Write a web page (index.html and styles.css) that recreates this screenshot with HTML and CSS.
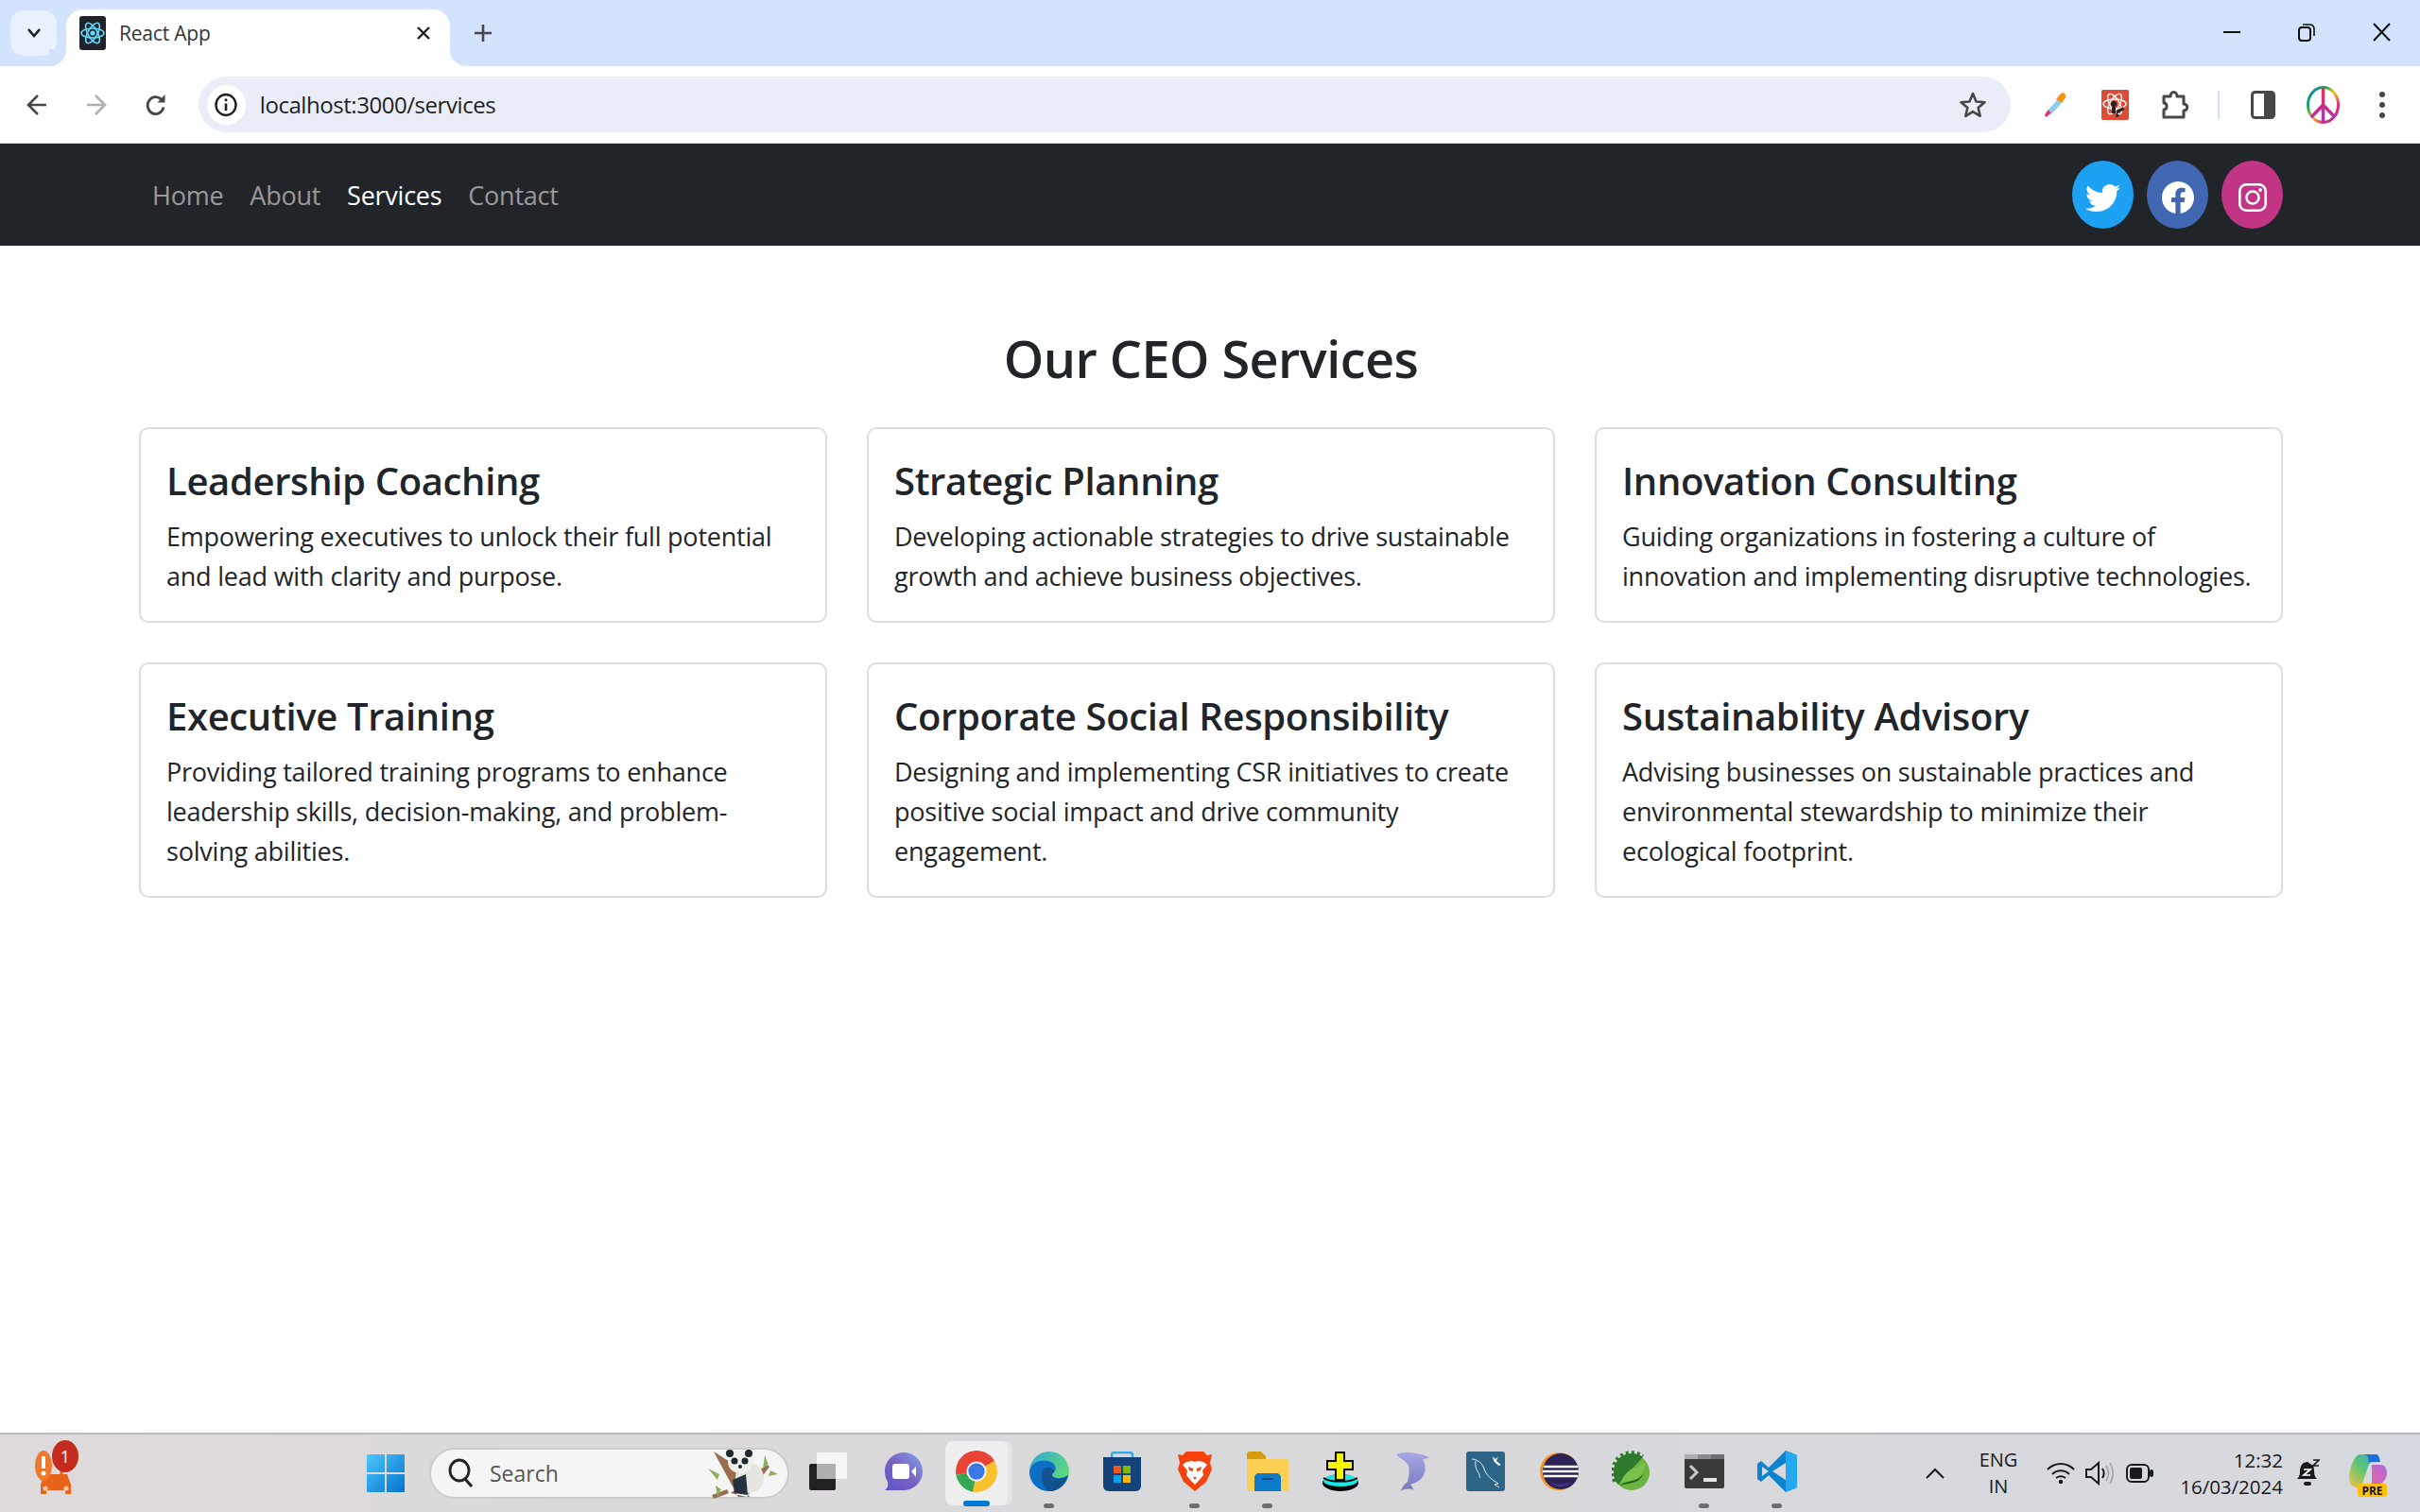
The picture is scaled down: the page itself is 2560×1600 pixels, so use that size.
FILE: index.html
```html
<!DOCTYPE html>
<html lang="en">
<head>
    <meta charset="UTF-8">
    <meta name="viewport" content="width=device-width, initial-scale=1.0">
    <title>React App</title>
    <link rel="stylesheet" href="styles.css">
</head>
<body>
    <div class="tabstrip">
        <div class="tab-list">
            <svg width="16" height="12" viewBox="0 0 16 12"><path d="M2 2l6 7 6-7" fill="none" stroke="#1f1f1f" stroke-width="2.6"/></svg>
        </div>
        <div class="tab">
            <svg class="favicon" width="28" height="36" viewBox="0 0 28 36">
                <rect width="28" height="36" rx="3" fill="#20232a"/>
                <g fill="none" stroke="#61dafb" stroke-width="1.6">
                    <ellipse cx="14" cy="18" rx="12" ry="5"/>
                    <ellipse cx="14" cy="18" rx="12" ry="5" transform="rotate(60 14 18)"/>
                    <ellipse cx="14" cy="18" rx="12" ry="5" transform="rotate(120 14 18)"/>
                </g>
                <circle cx="14" cy="18" r="2.6" fill="#61dafb"/>
            </svg>
            <span class="tab-title">React App</span>
            <svg class="tab-close" width="16" height="16" viewBox="0 0 16 16"><path d="M2 2l12 12M14 2L2 14" stroke="#1f1f1f" stroke-width="2.4"/></svg>
        </div>
        <svg class="new-tab" width="18" height="18" viewBox="0 0 18 18"><path d="M9 0v18M0 9h18" stroke="#474747" stroke-width="2.6"/></svg>
        <div class="window-btns">
            <svg width="18" height="18" viewBox="0 0 18 18"><path d="M0 9h18" stroke="#111" stroke-width="2"/></svg>
            <svg width="18" height="20" viewBox="0 0 18 20"><rect x="1" y="5" width="12" height="14" rx="3" fill="none" stroke="#111" stroke-width="2"/><path d="M5 2h7c3 0 5 2 5 5v7" fill="none" stroke="#111" stroke-width="1.6"/></svg>
            <svg width="19" height="20" viewBox="0 0 19 20"><path d="M1 1l17 18M18 1L1 19" stroke="#111" stroke-width="2"/></svg>
        </div>
    </div>

    <div class="toolbar">
        <div class="nav-btns">
            <svg width="22" height="24" viewBox="0 0 22 24"><path d="M21 12H3M12 2L2 12l10 10" fill="none" stroke="#474747" stroke-width="2.6"/></svg>
            <svg width="22" height="24" viewBox="0 0 22 24"><path d="M1 12h18M10 2l10 10-10 10" fill="none" stroke="#b0b0b0" stroke-width="2.6"/></svg>
            <svg width="22" height="24" viewBox="0 0 22 24"><path d="M19 14.500A8.500 9 0 1 1 16.500 6" fill="none" stroke="#474747" stroke-width="2.8"/><path d="M20.500 1v8.500h-8z" fill="#474747"/></svg>
        </div>
        <div class="omnibox">
            <div class="site-info">
                <svg width="24" height="26" viewBox="0 0 24 26"><ellipse cx="12" cy="13" rx="10.500" ry="11" fill="none" stroke="#1f1f1f" stroke-width="2.4"/><path d="M12 11.500V19" stroke="#1f1f1f" stroke-width="2.6"/><circle cx="12" cy="7.800" r="1.500" fill="#1f1f1f"/></svg>
            </div>
            <span class="url">localhost:3000/services</span>
            <svg class="star" width="30" height="30" viewBox="0 0 30 30"><path d="M15 3l3.500 8.500 9 .7-6.900 5.800 2.100 8.800-7.700-4.700-7.700 4.700 2.100-8.800-6.900-5.800 9-.7z" fill="none" stroke="#474747" stroke-width="2.600" stroke-linejoin="round"/></svg>
        </div>
        <div class="extensions">
            <svg class="ext-dropper" width="24" height="28" viewBox="0 0 24 28">
                <path d="M4 20L15 8l4 4L7 25z" fill="#8fcdf0"/>
                <path d="M1 25l3.500-6 3 3.500-5 4.500z" fill="#f0246e"/>
                <path d="M13 8l5-6c2-2 6 0 5 4l-2 3-2 3z" fill="#f79009"/>
            </svg>
            <svg class="ext-react" width="29" height="32" viewBox="0 0 29 32">
                <rect width="29" height="32" rx="2" fill="#de4b37"/>
                <g fill="none" stroke="#fff" stroke-width="1.300">
                    <ellipse cx="14" cy="15" rx="12" ry="5"/>
                    <ellipse cx="14" cy="15" rx="12" ry="5" transform="rotate(60 14 15)"/>
                    <ellipse cx="14" cy="15" rx="12" ry="5" transform="rotate(120 14 15)"/>
                </g>
                <circle cx="13" cy="15" r="3" fill="#222"/>
                <path d="M11 18h4v7h-4zM16 22l7-4 1 3-7 4 2 3-4 1z" fill="#222"/>
            </svg>
            <svg class="ext-puzzle" width="30" height="32" viewBox="0 0 30 32"><path d="M3 7h7c0-6 7-6 7 0h7v8c5 0 5 7 0 7v7H3v-8c4 0 4-7 0-7z" fill="none" stroke="#474747" stroke-width="3" stroke-linejoin="round"/></svg>
            <span class="ext-divider"></span>
            <svg class="ext-panel" width="26" height="30" viewBox="0 0 26 30"><rect x="1.500" y="1.500" width="23" height="27" rx="3" fill="none" stroke="#474747" stroke-width="3"/><rect x="14" y="2" width="10" height="26" fill="#474747"/></svg>
            <svg class="ext-peace" width="35" height="40" viewBox="0 0 35 40">
                <defs>
                    <linearGradient id="peaceGrad" x1="0" y1="0" x2="1" y2="1">
                        <stop offset="0" stop-color="#0a7bc4"/>
                        <stop offset=".3" stop-color="#21a95b"/>
                        <stop offset=".5" stop-color="#f5c518"/>
                        <stop offset=".75" stop-color="#ec2a6d"/>
                        <stop offset="1" stop-color="#8a2fc0"/>
                    </linearGradient>
                    <linearGradient id="peaceStem" x1="0" y1="0" x2="0" y2="1">
                        <stop offset="0" stop-color="#f0304f"/>
                        <stop offset="1" stop-color="#a632b8"/>
                    </linearGradient>
                </defs>
                <ellipse cx="17.500" cy="20" rx="16" ry="18.500" fill="#fff" stroke="url(#peaceGrad)" stroke-width="3"/>
                <path d="M17.500 2v36M17.500 20L5 33M17.500 20L30 33" fill="none" stroke="url(#peaceStem)" stroke-width="3.400"/>
            </svg>
            <svg class="ext-menu" width="8" height="30" viewBox="0 0 8 30"><circle cx="4" cy="4" r="3" fill="#474747"/><circle cx="4" cy="15" r="3" fill="#474747"/><circle cx="4" cy="26" r="3" fill="#474747"/></svg>
        </div>
    </div>

    <nav class="navbar">
        <div class="nav-links">
            <a class="nav-link" href="#">Home</a>
            <a class="nav-link" href="#">About</a>
            <a class="nav-link active" href="#">Services</a>
            <a class="nav-link" href="#">Contact</a>
        </div>
        <div class="socials">
            <a class="social twitter" href="#">
                <svg width="37" height="30" viewBox="0 1.500 16 13.500" preserveAspectRatio="none"><path fill="#fff" d="M5.026 15c6.038 0 9.341-5.003 9.341-9.334 0-.14 0-.282-.006-.422A6.685 6.685 0 0 0 16 3.542a6.658 6.658 0 0 1-1.889.518 3.301 3.301 0 0 0 1.447-1.817 6.533 6.533 0 0 1-2.087.793A3.286 3.286 0 0 0 7.875 6.03a9.325 9.325 0 0 1-6.767-3.429 3.289 3.289 0 0 0 1.018 4.382A3.323 3.323 0 0 1 .64 6.575v.045a3.288 3.288 0 0 0 2.632 3.218 3.203 3.203 0 0 1-.865.115 3.23 3.23 0 0 1-.614-.057 3.283 3.283 0 0 0 3.067 2.277A6.588 6.588 0 0 1 .78 13.58a6.32 6.32 0 0 1-.78-.045A9.344 9.344 0 0 0 5.026 15z"/></svg>
            </a>
            <a class="social facebook" href="#">
                <svg width="34" height="34" viewBox="0 0 16 16"><path fill="#fff" d="M16 8.049c0-4.446-3.582-8.05-8-8.05C3.580 0-.002 3.603-.002 8.050c0 4.017 2.926 7.347 6.750 7.951v-5.625h-2.030V8.050H6.750V6.275c0-2.017 1.195-3.131 3.022-3.131.876 0 1.791.157 1.791.157v1.980h-1.009c-.993 0-1.303.621-1.303 1.258v1.510h2.218l-.354 2.326H9.250V16c3.824-.604 6.750-3.934 6.750-7.951z"/></svg>
            </a>
            <a class="social instagram" href="#">
                <svg width="30" height="30" viewBox="0 0 30 30"><rect x="1.300" y="1.300" width="27.400" height="27.400" rx="7" fill="none" stroke="#fff" stroke-width="2.600"/><circle cx="15" cy="15" r="6.500" fill="none" stroke="#fff" stroke-width="2.600"/><circle cx="23" cy="7" r="1.900" fill="#fff"/></svg>
            </a>
        </div>
    </nav>

    <main class="services">
        <h2 class="services-title">Our CEO Services</h2>
        <div class="card-grid">
            <div class="card">
                <h4 class="card-title">Leadership Coaching</h4>
                <p class="card-text">Empowering executives to unlock their full potential and lead with clarity and purpose.</p>
            </div>
            <div class="card">
                <h4 class="card-title">Strategic Planning</h4>
                <p class="card-text">Developing actionable strategies to drive sustainable growth and achieve business objectives.</p>
            </div>
            <div class="card">
                <h4 class="card-title">Innovation Consulting</h4>
                <p class="card-text">Guiding organizations in fostering a culture of innovation and implementing disruptive technologies.</p>
            </div>
            <div class="card">
                <h4 class="card-title">Executive Training</h4>
                <p class="card-text">Providing tailored training programs to enhance leadership skills, decision-making, and problem-solving abilities.</p>
            </div>
            <div class="card">
                <h4 class="card-title">Corporate Social Responsibility</h4>
                <p class="card-text">Designing and implementing CSR initiatives to create positive social impact and drive community engagement.</p>
            </div>
            <div class="card">
                <h4 class="card-title">Sustainability Advisory</h4>
                <p class="card-text">Advising businesses on sustainable practices and environmental stewardship to minimize their ecological footprint.</p>
            </div>
        </div>
    </main>

    <footer class="taskbar">
        <div class="widget">
            <svg width="48" height="52" viewBox="0 0 48 52">
                <path d="M8 38l4-11h24l4 11v10h-6v-4H14v4H8z" fill="#e8641c"/>
                <path d="M30 16v11" stroke="#e8641c" stroke-width="3"/>
                <ellipse cx="11" cy="18" rx="9" ry="16" fill="#f0782a"/>
                <rect x="9" y="8" width="4" height="13" fill="#fff"/>
                <circle cx="11" cy="26" r="2.500" fill="#fff"/>
                <circle cx="13" cy="42" r="2.500" fill="#fbc9a8"/>
                <circle cx="35" cy="42" r="2.500" fill="#fbc9a8"/>
            </svg>
            <span class="widget-badge">1</span>
        </div>

        <svg class="start" width="40" height="40" viewBox="0 0 40 40">
            <defs>
                <linearGradient id="winGrad" x1="0" y1="0" x2="1" y2="1">
                    <stop offset="0" stop-color="#4cc6fb"/>
                    <stop offset="1" stop-color="#0373cf"/>
                </linearGradient>
            </defs>
            <path d="M1 0h18v19H0V1a1 1 0 0 1 1-1zM21 0h18a1 1 0 0 1 1 1v18H21zM0 21h19v19H1a1 1 0 0 1-1-1zM21 21h19v18a1 1 0 0 1-1 1H21z" fill="url(#winGrad)"/>
        </svg>

        <div class="search">
            <svg width="28" height="32" viewBox="0 0 28 32"><ellipse cx="12" cy="13" rx="10" ry="11" fill="none" stroke="#222" stroke-width="2.800"/><path d="M18 22l7 8" stroke="#222" stroke-width="3"/></svg>
            <span class="search-text">Search</span>
            <svg class="panda" width="76" height="54" viewBox="0 0 76 54">
                <path d="M8 4l14 26 12 22h12L34 30 30 18zM26 48L64 18l3 2-24 32zM6 50l16-6 2 4-16 6z" fill="#9a6d4e"/>
                <path d="M2 22l12 6-2 6zM62 8l-2 14 6-4zM68 24l8 4-10 2zM10 40l2 12 4-8z" fill="#8fae5f"/>
                <ellipse cx="46" cy="32" rx="15" ry="16" fill="#e6e6e0"/>
                <path d="M28 34l14-6 2 22-14-2z" fill="#24323f"/>
                <ellipse cx="36" cy="15" rx="13" ry="12" fill="#f0f0ea"/>
                <circle cx="25" cy="6" r="4" fill="#1d2730"/><circle cx="45" cy="6" r="4" fill="#1d2730"/>
                <circle cx="30" cy="14" r="3.500" fill="#1d2730"/><circle cx="41" cy="14" r="3.500" fill="#1d2730"/>
                <circle cx="36" cy="20" r="2" fill="#1d2730"/>
            </svg>
        </div>

        <div class="apps">
            <div class="app">
                <svg width="46" height="40" viewBox="0 0 46 40"><rect x="0" y="12" width="28" height="28" rx="2" fill="#222"/><rect x="8" y="0" width="32" height="28" rx="1" fill="#fff" fill-opacity=".75"/><rect x="8" y="12" width="20" height="16" fill="#aaa" fill-opacity=".8"/></svg>
            </div>
            <div class="app">
                <svg width="42" height="42" viewBox="0 0 42 42">
                    <defs><linearGradient id="meetGrad" x1="1" y1="0" x2="0" y2="1"><stop offset="0" stop-color="#7fa6ea"/><stop offset=".5" stop-color="#7a62c2"/><stop offset="1" stop-color="#5b54cf"/></linearGradient></defs>
                    <path d="M21 1c11 0 20 9 20 20s-9 20-20 20H1c3-2 4-5 3-9C2 29 1 25 1 21 1 10 10 1 21 1z" fill="url(#meetGrad)"/>
                    <rect x="9" y="13" width="18" height="16" rx="3" fill="#fff"/><path d="M29 21l5-5v11z" fill="#fff"/>
                </svg>
            </div>
            <div class="app app-active">
                <svg width="44" height="44" viewBox="0 0 48 48">
                    <path d="M24 24L.4 28.200A24 24 0 0 1 44.800 12z" fill="#ea4335"/>
                    <path d="M24 24L44.800 12A24 24 0 0 1 19.800 47.600z" fill="#fbc02d"/>
                    <path d="M24 24L19.800 47.600A24 24 0 0 1 .4 28.200z" fill="#34a853"/>
                    <circle cx="24" cy="24" r="11.500" fill="#fff"/><circle cx="24" cy="24" r="9.500" fill="#3b78e7"/>
                </svg>
                <span class="app-bar"></span>
            </div>
            <div class="app app-open">
                <svg width="42" height="42" viewBox="0 0 42 42">
                    <defs><linearGradient id="edgeTop" x1="0" y1="0" x2="1" y2=".7"><stop offset="0" stop-color="#2fa8d8"/><stop offset="1" stop-color="#65de71"/></linearGradient></defs>
                    <circle cx="21" cy="21" r="21" fill="url(#edgeTop)"/>
                    <path d="M0 21C2 11 12 8 20 10c8 2 10 9 5 12-3 2 0 6 5 6 4 0 9-1 11-3-2 10-10 17-20 17C9 42 0 33 0 21z" fill="#0c6fc4"/>
                    <path d="M13 24c0-6 6-9 11-6 3 2 3 4 1 5-3 2 0 6 5 6 4 0 9-2 11-4-3 10-11 17-19 17-8-3-9-12-9-18z" fill="#12528f"/>
                </svg>
            </div>
            <div class="app">
                <svg width="40" height="42" viewBox="0 0 40 42">
                    <path d="M9 8V4c0-2 1-3 3-3h16c2 0 3 1 3 3v4" fill="none" stroke="#2fa9e8" stroke-width="2.400"/>
                    <path d="M0 6h40v30c0 3-2 6-6 6H6c-4 0-6-3-6-6z" fill="#14437c"/>
                    <rect x="11" y="15" width="8" height="8" fill="#e8562a"/><rect x="21" y="15" width="8" height="8" fill="#7fba00"/>
                    <rect x="11" y="25" width="8" height="8" fill="#00a4ef"/><rect x="21" y="25" width="8" height="8" fill="#ffb900"/>
                </svg>
            </div>
            <div class="app app-open">
                <svg width="36" height="42" viewBox="0 0 36 42">
                    <path d="M9 0h18l4 4 5-1-2 9 2 7-6 13-12 10L6 32 0 19l2-7-2-9 5 1z" fill="#f8420e"/>
                    <path d="M9 11l6-1 3 1 3-1 6 1 4 3-5 6 1 5-5 6-4 4-4-4-5-6 1-5-5-6z" fill="#fff"/>
                    <path d="M11 16l5 2v3l-4-1zM25 16l-5 2v3l4-1zM16 27h4l-2 3z" fill="#f8420e"/>
                </svg>
            </div>
            <div class="app app-open">
                <svg width="44" height="42" viewBox="0 0 44 42">
                    <path d="M0 3c0-2 1-3 3-3h12l5 5v6H0z" fill="#d69c10"/>
                    <path d="M0 8h41c2 0 3 1 3 3v29c0 1-1 2-3 2H3c-2 0-3-1-3-2z" fill="#fbcf53"/>
                    <path d="M8 42V28c0-3 2-5 5-5h18c3 0 5 2 5 5v14z" fill="#0f7ac9"/>
                    <rect x="16" y="28" width="12" height="2" fill="#0a4f88"/>
                </svg>
            </div>
            <div class="app">
                <svg width="40" height="44" viewBox="0 0 40 44">
                    <ellipse cx="20" cy="34" rx="19" ry="9" fill="#000"/>
                    <ellipse cx="20" cy="32" rx="18" ry="7" fill="#19e6e6"/>
                    <path d="M2 35c8 5 28 5 36 0M2 29c8 5 28 5 36 0" fill="none" stroke="#000" stroke-width="1.500"/>
                    <path d="M14 1h11v9h9v11h-9v11H14V21H5V10h9z" fill="#000"/>
                    <path d="M16 3h7v9h9v7h-9v11h-7V19H7v-7h9z" fill="#f5f500"/>
                </svg>
            </div>
            <div class="app">
                <svg width="36" height="42" viewBox="0 0 36 42">
                    <defs><linearGradient id="dolphinGrad" x1="0" y1="0" x2="0" y2="1"><stop offset="0" stop-color="#a8a8e6"/><stop offset="1" stop-color="#7878bc"/></linearGradient></defs>
                    <path d="M0 3c6-3 22-3 35 3-4 2-6 2-7 2 4 7 4 16-3 22-4 3-8 4-10 5 2 2 3 4 3 6-3-2-9-2-13 1 1-4 3-7 7-10 2-8 2-13 1-17C10 9 4 8 0 3z" fill="url(#dolphinGrad)"/>
                </svg>
            </div>
            <div class="app">
                <svg width="41" height="42" viewBox="0 0 41 42">
                    <rect width="41" height="42" rx="3" fill="#2c6486"/>
                    <path d="M6 8c5 0 11 4 13 10 2 7 7 10 9 12M10 10c-1 5 1 10 4 14 0 2 0 3 1 4M28 30l6 4-4 1 5 3" fill="none" stroke="#e6eef3" stroke-width="1"/>
                    <path d="M30 5l6 6M28 5l3 3 3-3-2 5 5 4-3 1-5-5z" fill="#e6eef3"/>
                </svg>
            </div>
            <div class="app">
                <svg width="42" height="42" viewBox="0 0 42 42">
                    <circle cx="21" cy="21" r="20" fill="#f7941e"/>
                    <circle cx="23" cy="21" r="19" fill="#2c2255"/>
                    <path d="M5 16h36M4 21h38M5 26h36" stroke="#fff" stroke-width="2.400"/>
                    <path d="M10 30c4 6 22 6 26 0-4 5-8 7-13 7s-9-2-13-7z" fill="#473788"/>
                </svg>
            </div>
            <div class="app">
                <svg width="42" height="44" viewBox="0 0 42 44">
                    <circle cx="21" cy="23" r="19" fill="#6db33f"/>
                    <path d="M33 7C26 1 14 2 8 8 2 14 0 24 4 32c1 2 2 3 3 4 6-9 14-16 26-29z" fill="#2d7a2d"/>
                    <path d="M3 33C-1 22 2 11 9 6c7-5 17-5 24 0" fill="none" stroke="#2d7a2d" stroke-width="4" stroke-dasharray="3 3"/>
                    <path d="M35 11c1 11-5 19-14 20-4 1-8 1-11 3 2-9 9-14 15-16 4-1 7-3 10-7z" fill="#7cc04e"/>
                    <path d="M8 37c5-3 9-4 14-5 5-1 9-4 12-8-3 6-7 9-12 10-5 1-9 2-14 3z" fill="#1c5e21"/>
                </svg>
            </div>
            <div class="app app-open">
                <svg width="42" height="36" viewBox="0 0 42 36">
                    <rect width="42" height="36" rx="2" fill="#3a3a3a"/>
                    <rect width="14" height="5" fill="#adadad"/><rect x="14" width="14" height="5" fill="#8a8a8a"/><rect x="28" width="14" height="5" fill="#6e6e6e"/>
                    <path d="M6 12l7 7-7 7" fill="none" stroke="#c9c9c9" stroke-width="3"/>
                    <rect x="20" y="25" width="14" height="4" fill="#e6e6e6"/>
                </svg>
            </div>
            <div class="app app-open">
                <svg width="42" height="44" viewBox="0 0 42 44">
                    <path d="M30 0L12 18 4 11 0 14v16l4 3 8-7 18 18 12-5V5z" fill="#0a84d0"/>
                    <path d="M30 0l12 5v34l-12 5z" fill="#24a8ef"/>
                    <path d="M30 13L16 22l14 9z" fill="#d9d9d9"/>
                    <path d="M5 17l7 5-7 5z" fill="#d9d9d9"/>
                </svg>
            </div>
        </div>

        <div class="tray">
            <svg class="tray-chevron" width="20" height="12" viewBox="0 0 20 12"><path d="M1 11l9-9 9 9" fill="none" stroke="#1a1a1a" stroke-width="2"/></svg>
            <div class="tray-lang"><span>ENG</span><span>IN</span></div>
            <svg class="tray-wifi" width="30" height="24" viewBox="0 0 30 24"><path d="M1 8c8-8 20-8 28 0M6 13c5-5 13-5 18 0M10 17c3-2 7-2 10 0" fill="none" stroke="#1a1a1a" stroke-width="2"/><circle cx="15" cy="21" r="2.200" fill="#1a1a1a"/></svg>
            <svg class="tray-sound" width="30" height="26" viewBox="0 0 30 26"><path d="M1 9h5l8-7v22l-8-7H1z" fill="none" stroke="#1a1a1a" stroke-width="2"/><path d="M18 8c2 3 2 7 0 10" fill="none" stroke="#1a1a1a" stroke-width="2"/><path d="M22 5c3 5 3 11 0 16M26 2c4 7 4 15 0 22" fill="none" stroke="#aaa" stroke-width="1.800"/></svg>
            <svg class="tray-battery" width="29" height="20" viewBox="0 0 29 20"><rect x="1" y="1" width="23" height="18" rx="5" fill="none" stroke="#1a1a1a" stroke-width="2"/><rect x="4" y="4" width="13" height="12" rx="2" fill="#1a1a1a"/><rect x="25" y="6" width="4" height="8" rx="2" fill="#1a1a1a"/></svg>
            <div class="tray-clock"><span>12:32</span><span>16/03/2024</span></div>
            <svg class="tray-bell" width="24" height="30" viewBox="0 0 24 30"><path d="M11 3c-5 0-8 4-8 10 0 4-1 6-3 8h21c-2-2-3-4-3-8 0-2 0-4-1-6z" fill="#1a1a1a"/><rect x="7" y="24" width="8" height="4" rx="2" fill="#1a1a1a"/><path d="M7 11h7l-7 6h7" fill="none" stroke="#fff" stroke-width="1.700"/><path d="M17 1h6l-6 6h6" fill="none" stroke="#1a1a1a" stroke-width="1.700"/></svg>
            <div class="copilot">
                <svg width="40" height="42" viewBox="0 0 40 42">
                    <defs>
                        <linearGradient id="copA" x1="0" y1="1" x2="1" y2="0"><stop offset="0" stop-color="#f6c544"/><stop offset=".5" stop-color="#5fc372"/><stop offset="1" stop-color="#2aa8e0"/></linearGradient>
                        <linearGradient id="copB" x1="0" y1="1" x2="1" y2="0"><stop offset="0" stop-color="#f06292"/><stop offset="1" stop-color="#b06ae0"/></linearGradient>
                    </defs>
                    <path d="M12 1h16c3 0 4 3 4 5l-2 2c-5 0-8 1-10 6l-6 18c-1 3-3 4-6 4-4 0-8-4-8-9C0 18 5 1 12 1z" fill="url(#copA)"/>
                    <path d="M14 1h14c3 0 4 3 5 8H20c2-5-1-8-6-8z" fill="#1c6fd6"/>
                    <path d="M24 12h10c4 0 6 5 6 10-1 8-8 14-22 14 3 0 5-2 6-5z" fill="url(#copB)"/>
                </svg>
                <span class="copilot-pre">PRE</span>
            </div>
        </div>
    </footer>
</body>
</html>
```

FILE: styles.css
```css
* {
    box-sizing: border-box;
}

body {
    margin: 0;
    width: 2560px;
    height: 1600px;
    overflow: hidden;
    display: flex;
    flex-direction: column;
    background-color: #fff;
    color: #212529;
    font-family: "Open Sans", "Noto Sans", sans-serif;
}

svg {
    display: block;
    flex-shrink: 0;
}

/* browser window */
.tabstrip {
    height: 70px;
    display: flex;
    align-items: flex-end;
    background-color: #d3e3fd;
    padding-left: 11px;
}

.tab-list {
    width: 49px;
    height: 48px;
    margin-bottom: 11px;
    margin-right: 10px;
    display: flex;
    align-items: center;
    justify-content: center;
    background-color: #e9f0fe;
    border-radius: 14px;
}

.tab {
    position: relative;
    width: 406px;
    height: 60px;
    display: flex;
    align-items: center;
    padding: 0 20px 10px 14px;
    background-color: #fff;
    border-radius: 18px 18px 0 0;
}

.tab::before,
.tab::after {
    content: "";
    position: absolute;
    bottom: 0;
    width: 18px;
    height: 18px;
}

.tab::before {
    left: -18px;
    background: radial-gradient(circle at 0 0, #d3e3fd 18px, #fff 18.5px);
}

.tab::after {
    right: -18px;
    background: radial-gradient(circle at 100% 0, #d3e3fd 18px, #fff 18.5px);
}

.tab-title {
    margin-left: 14px;
    flex: 1;
    font-size: 21px;
    letter-spacing: -0.2px;
    color: #333;
}

.new-tab {
    margin: 0 0 26px 26px;
}

.window-btns {
    margin-left: auto;
    margin-bottom: 26px;
    padding-right: 31px;
    display: flex;
    align-items: center;
    gap: 61px;
}

.toolbar {
    height: 82px;
    display: flex;
    align-items: center;
    background-color: #fff;
    border-radius: 16px 16px 0 0;
    padding-right: 36px;
    border-bottom: 1px solid #d9d9d9;
}

.nav-btns {
    width: 210px;
    padding-left: 28px;
    display: flex;
    gap: 41px;
}

.omnibox {
    width: 1919px;
    height: 59px;
    display: flex;
    align-items: center;
    padding: 0 25px 0 9px;
    background-color: #e9edf7;
    border-radius: 30px;
}

.site-info {
    width: 41px;
    height: 42px;
    display: flex;
    align-items: center;
    justify-content: center;
    background-color: #fff;
    border-radius: 50%;
}

.url {
    margin-left: 15px;
    flex: 1;
    font-size: 24px;
    letter-spacing: -0.45px;
    color: #1f1f1f;
}

.extensions {
    flex: 1;
    display: flex;
    align-items: center;
    padding-left: 35px;
}

.ext-react {
    margin-left: 37px;
}

.ext-puzzle {
    margin-left: 34px;
}

.ext-divider {
    width: 2px;
    height: 30px;
    margin-left: 30px;
    background-color: #d3e3fd;
}

.ext-panel {
    margin-left: 33px;
}

.ext-peace {
    margin-left: 33px;
}

.ext-menu {
    margin-left: 41px;
}

/* page */
.navbar {
    height: 108px;
    display: flex;
    align-items: center;
    justify-content: space-between;
    padding: 0 145px 0 147px;
    background-color: #212529;
}

.nav-links {
    display: flex;
}

.nav-link {
    padding: 0 14px;
    font-size: 27px;
    letter-spacing: -0.25px;
    color: rgba(255, 255, 255, 0.55);
    text-decoration: none;
}

.nav-link.active {
    color: #fff;
}

.socials {
    display: flex;
    gap: 14px;
}

.social {
    width: 65px;
    height: 72px;
    display: flex;
    align-items: center;
    justify-content: center;
    border-radius: 50%;
    padding-top: 6px;
}

.twitter {
    background-color: #1da1f2;
}

.facebook {
    background-color: #4267b2;
}

.instagram {
    background-color: #c13584;
}

.services {
    flex: 1;
    padding: 0 145px 0 147px;
}

.services-title {
    margin: 86px 0 39px;
    font-size: 54px;
    font-weight: 600;
    letter-spacing: -0.55px;
    line-height: 67px;
    text-align: center;
}

.card-grid {
    display: grid;
    grid-template-columns: repeat(3, 1fr);
    gap: 42px;
}

.card {
    padding: 30px 27px 26px;
    background-color: #fff;
    border: 2px solid #dcdddf;
    border-radius: 10px;
}

.card-title {
    margin: 0 0 13px;
    font-size: 40px;
    font-weight: 600;
    letter-spacing: -0.35px;
    line-height: 50px;
}

.card-text {
    margin: 0;
    font-size: 27px;
    letter-spacing: -0.22px;
    line-height: 42px;
}

/* windows taskbar */
.taskbar {
    height: 84px;
    display: flex;
    align-items: center;
    background: linear-gradient(90deg, #dfdadc, #d9d8da 45%, #d6d9df);
    border-top: 2px solid #b9b9b9;
}

.widget {
    position: relative;
    margin-left: 35px;
    width: 48px;
}

.widget-badge {
    position: absolute;
    top: -9px;
    left: 20px;
    width: 28px;
    height: 34px;
    display: flex;
    align-items: center;
    justify-content: center;
    font-size: 18px;
    color: #fff;
    background-color: #c42b1c;
    border-radius: 50%;
}

.start {
    margin-left: 305px;
}

.search {
    width: 381px;
    height: 54px;
    margin-left: 26px;
    display: flex;
    align-items: center;
    padding-left: 18px;
    background-color: #f5f5f5;
    border: 2px solid #cdcbcc;
    border-radius: 27px;
}

.search-text {
    margin-left: 16px;
    flex: 1;
    font-size: 23px;
    color: #555;
}

.panda {
    margin-right: 10px;
}

.apps {
    margin-left: 5px;
    display: flex;
}

.app {
    position: relative;
    width: 77px;
    height: 68px;
    display: flex;
    align-items: center;
    justify-content: center;
    padding-bottom: 4px;
}

.app-open::after {
    content: "";
    position: absolute;
    left: 33px;
    bottom: -3px;
    width: 11px;
    height: 5px;
    background-color: #6e6e6e;
    border-radius: 3px;
}

.app-active {
    width: 66px;
    margin: 0 5px 0 6px;
    background-color: #efefef;
    border-radius: 8px;
    box-shadow: 5px 0 0 #e6e5e5;
}

.app-bar {
    position: absolute;
    left: 19px;
    bottom: -1px;
    width: 28px;
    height: 6px;
    background-color: #0078d4;
    border-radius: 3px;
}

.tray {
    flex: 1;
    display: flex;
    align-items: center;
    padding-left: 119px;
    color: #1a1a1a;
}

.tray-lang {
    width: 70px;
    margin-left: 22px;
    display: flex;
    flex-direction: column;
    align-items: center;
    font-size: 20px;
    line-height: 28px;
}

.tray-wifi {
    margin-left: 16px;
}

.tray-sound {
    margin-left: 11px;
}

.tray-battery {
    margin-left: 13px;
}

.tray-clock {
    width: 127px;
    margin-left: 10px;
    display: flex;
    flex-direction: column;
    align-items: flex-end;
    font-size: 20.5px;
    line-height: 28px;
}

.tray-bell {
    margin-left: 15px;
}

.copilot {
    position: relative;
    margin-left: 31px;
}

.copilot-pre {
    position: absolute;
    left: 9px;
    bottom: -4px;
    width: 31px;
    height: 14px;
    display: flex;
    align-items: center;
    justify-content: center;
    font-size: 12px;
    font-weight: 700;
    color: #111;
    background-color: #ffc107;
    border-radius: 3px;
}
```
